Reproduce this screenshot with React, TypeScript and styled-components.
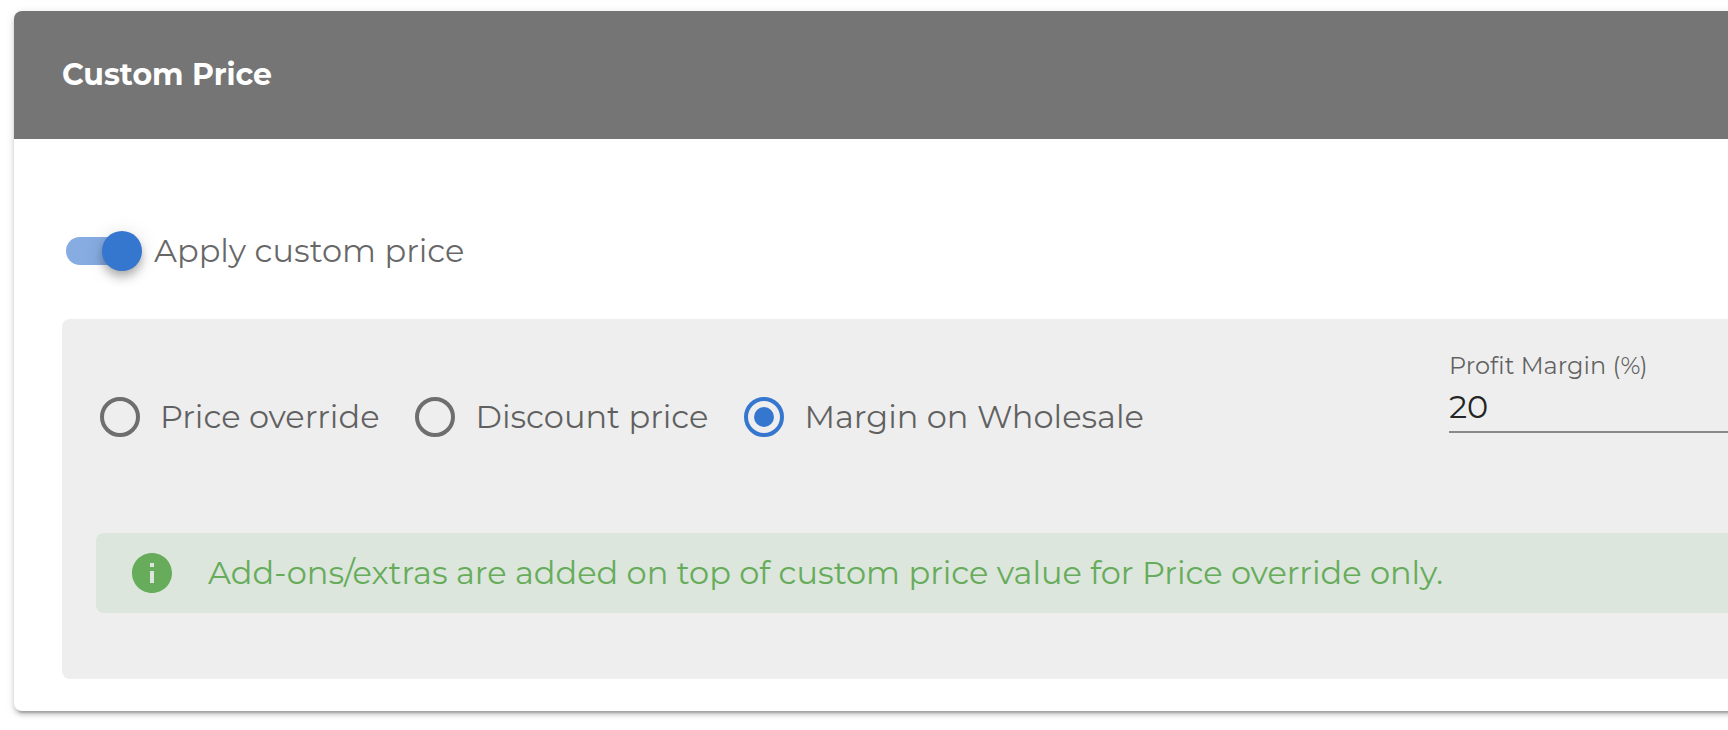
import React, { useState } from "react";
import styled, { createGlobalStyle } from "styled-components";

const blue = "#3576cf";
const green = "#67ac5b";

const GlobalStyle = createGlobalStyle`
  *, *::before, *::after { box-sizing: border-box; }
  body {
    margin: 0;
    background: #fff;
    font-family: Montserrat, "Open Sans", sans-serif;
    font-size: 32px;
    line-height: 40px;
    color: rgba(0, 0, 0, 0.6);
  }
  #root { overflow: hidden; }
`;

/* The card runs on past the right edge of the window. */
const Page = styled.main`
  margin-right: -16px;
  padding: 11px 0 19px 14px;
`;

const Card = styled.section`
  background: #fff;
  border-radius: 8px 0 0 8px;
  box-shadow:
    0 6px 2px -4px rgba(0, 0, 0, 0.2),
    0 4px 4px 0 rgba(0, 0, 0, 0.14),
    0 2px 10px 0 rgba(0, 0, 0, 0.12);
`;

const CardHeader = styled.header`
  display: flex;
  align-items: center;
  height: 128px;
  padding: 0 48px;
  background: #757575;
  border-radius: 8px 0 0 0;
`;

const Title = styled.h2`
  margin: 0;
  font-size: 30px;
  font-weight: 700;
  color: #fff;
`;

const CardBody = styled.div`
  padding: 92px 0 32px 48px;
`;

const SwitchLabel = styled.label`
  display: flex;
  align-items: center;
  gap: 12px;
  width: fit-content;
  margin-left: 4px;
  cursor: pointer;
`;

const Switch = styled.input`
  appearance: none;
  position: relative;
  display: flex;
  align-items: center;
  width: 76px;
  height: 40px;
  margin: 0;
  cursor: pointer;

  &::before {
    content: "";
    width: 72px;
    height: 28px;
    border-radius: 14px;
    background: #bdbdbd;
  }

  &::after {
    content: "";
    position: absolute;
    left: 0;
    width: 40px;
    height: 40px;
    border-radius: 50%;
    background: #fafafa;
    box-shadow:
      0 6px 2px -4px rgba(0, 0, 0, 0.2),
      0 4px 4px 0 rgba(0, 0, 0, 0.14),
      0 2px 10px 0 rgba(0, 0, 0, 0.12);
  }

  &:checked::before { background: #86ace1; }
  &:checked::after {
    left: 36px;
    background: ${blue};
    box-shadow:
      0 4px 8px -2px rgba(0, 0, 0, 0.2),
      0 8px 10px 0 rgba(0, 0, 0, 0.14),
      0 2px 20px 0 rgba(0, 0, 0, 0.12);
  }
`;

const Panel = styled.div`
  margin-top: 48px;
  padding: 32px 0 66px 34px;
  background: #eee;
  border-radius: 8px 0 0 8px;
`;

const Options = styled.div`
  display: flex;
  align-items: flex-start;
  justify-content: space-between;
`;

const RadioGroup = styled.fieldset`
  display: flex;
  gap: 36px;
  margin: 0;
  padding: 46px 0 0 4px;
  border: 0;
`;

const RadioLabel = styled.label`
  display: flex;
  align-items: center;
  gap: 20px;
  white-space: nowrap;
  cursor: pointer;
`;

const Radio = styled.input`
  appearance: none;
  display: grid;
  place-items: center;
  width: 40px;
  height: 40px;
  margin: 0;
  border: 4px solid #6e6e6e;
  border-radius: 50%;
  cursor: pointer;

  &:checked { border-color: ${blue}; }
  &:checked::before {
    content: "";
    width: 20px;
    height: 20px;
    border-radius: 50%;
    background: ${blue};
  }
`;

const Field = styled.div`
  display: flex;
  flex-direction: column;
  width: 295px;
`;

const FieldLabel = styled.label`
  font-size: 24px;
  line-height: 30px;
`;

const FieldInput = styled.input`
  width: 100%;
  height: 52px;
  padding: 0;
  border: 0;
  border-bottom: 2px solid #8a8a8a;
  border-radius: 0;
  outline: 0;
  background: transparent;
  font: inherit;
  color: rgba(0, 0, 0, 0.87);
`;

const Notice = styled.div`
  display: flex;
  align-items: center;
  gap: 36px;
  margin-top: 96px;
  padding: 20px 36px;
  background: #dce6dd;
  border-radius: 8px 0 0 8px;
  color: ${green};
`;

const NoticeIcon = styled.svg`
  flex: none;
  width: 40px;
  height: 40px;
  fill: currentColor;
`;

const NoticeText = styled.p`
  margin: 0;
`;

const priceModes = ["Price override", "Discount price", "Margin on Wholesale"];

export default function App() {
  const [enabled, setEnabled] = useState(true);
  const [mode, setMode] = useState("Margin on Wholesale");
  const [margin, setMargin] = useState("20");

  return (
    <>
      <GlobalStyle />
      <Page>
        <Card>
          <CardHeader>
            <Title>Custom Price</Title>
          </CardHeader>
          <CardBody>
            <SwitchLabel>
              <Switch
                type="checkbox"
                role="switch"
                checked={enabled}
                onChange={(e) => setEnabled(e.target.checked)}
              />
              Apply custom price
            </SwitchLabel>
            <Panel>
              <Options>
                <RadioGroup>
                  {priceModes.map((name) => (
                    <RadioLabel key={name}>
                      <Radio
                        type="radio"
                        name="price-mode"
                        checked={mode === name}
                        onChange={() => setMode(name)}
                      />
                      {name}
                    </RadioLabel>
                  ))}
                </RadioGroup>
                <Field>
                  <FieldLabel htmlFor="margin">Profit Margin (%)</FieldLabel>
                  <FieldInput
                    id="margin"
                    inputMode="decimal"
                    value={margin}
                    onChange={(e) => setMargin(e.target.value)}
                  />
                </Field>
              </Options>
              <Notice>
                <NoticeIcon viewBox="2 2 20 20" aria-hidden="true">
                  <path d="M12 2C6.48 2 2 6.48 2 12s4.48 10 10 10 10-4.48 10-10S17.52 2 12 2zm1 15h-2v-6h2v6zm0-8h-2V7h2v2z" />
                </NoticeIcon>
                <NoticeText>
                  Add-ons/extras are added on top of custom price value for Price override only.
                </NoticeText>
              </Notice>
            </Panel>
          </CardBody>
        </Card>
      </Page>
    </>
  );
}
